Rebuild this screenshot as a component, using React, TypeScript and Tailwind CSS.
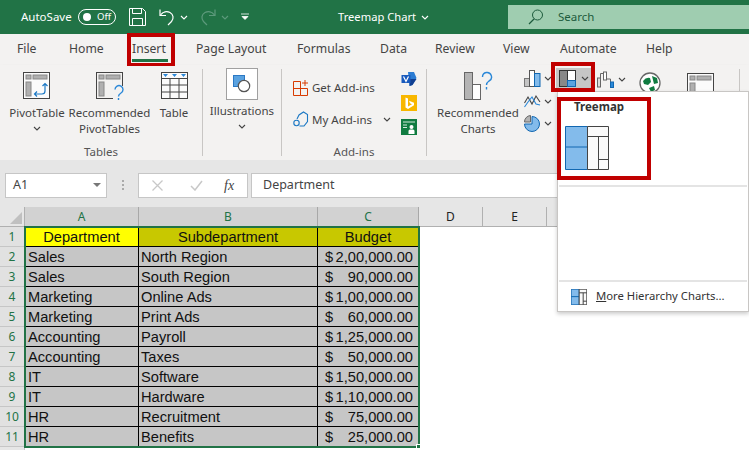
import type { ReactNode } from "react";

const tabs = [
  { name: "File", width: "w-[52px]" },
  { name: "Home", width: "w-[63px]" },
  { name: "Insert", width: "w-[64px]" },
  { name: "Page Layout", width: "w-[101px]" },
  { name: "Formulas", width: "w-[83px]" },
  { name: "Data", width: "w-[55px]" },
  { name: "Review", width: "w-[68px]" },
  { name: "View", width: "w-[57px]" },
  { name: "Automate", width: "w-[86px]" },
  { name: "Help", width: "w-[40px]" },
];

const rows = [
  ["Sales", "North Region", "2,00,000.00"],
  ["Sales", "South Region", "90,000.00"],
  ["Marketing", "Online Ads", "1,00,000.00"],
  ["Marketing", "Print Ads", "60,000.00"],
  ["Accounting", "Payroll", "1,25,000.00"],
  ["Accounting", "Taxes", "50,000.00"],
  ["IT", "Software", "1,50,000.00"],
  ["IT", "Hardware", "1,10,000.00"],
  ["HR", "Recruitment", "75,000.00"],
  ["HR", "Benefits", "25,000.00"],
];

function Chev({ className = "", color = "#444" }: { className?: string; color?: string }) {
  return (
    <svg width="8" height="5" viewBox="0 0 8 5" className={className}>
      <path d="M1 1l3 3 3-3" fill="none" stroke={color} strokeWidth="1.1" />
    </svg>
  );
}

function TreemapIcon({ size = 20 }: { size?: number }) {
  return (
    <svg width={size} height={size} viewBox="0 0 44 44">
      <rect x="0.5" y="0.5" width="22" height="43" fill="#83bbeb" stroke="#1167b1" vectorEffect="non-scaling-stroke" />
      <path d="M0.5 21h22" stroke="#1167b1" vectorEffect="non-scaling-stroke" />
      <rect x="22.5" y="0.5" width="21" height="43" fill="#fafafa" stroke="#444" vectorEffect="non-scaling-stroke" />
      <path d="M22.5 10.500h21M33.500 10.500v33M33.500 33.500h10" fill="none" stroke="#444" vectorEffect="non-scaling-stroke" />
    </svg>
  );
}

function PivotIcon({ question }: { question?: boolean }) {
  return (
    <svg width="30" height="30" viewBox="0 0 30 30">
      <rect x="1.5" y="1.5" width="26" height="26" fill={question ? "#f3f2f1" : "#fbfbfb"} stroke="#444" />
      <rect x="4" y="4" width="5" height="4" fill="#b0b0b0" stroke="#888" />
      <rect x="11" y="4" width="14" height="4" fill="#b0b0b0" stroke="#888" />
      <rect x="4" y="11" width="5" height="14" fill="#b0b0b0" stroke="#888" />
      {question ? (
        <>
          <rect x="18" y="15" width="12" height="15" fill="#f3f2f1" />
          <path d="M20 18.500a4 4 0 1 1 6 3.500c-1.500 1-2.500 1.500-2.500 3.500M23.500 27v2" fill="none" stroke="#2b88d8" strokeWidth="1.400" />
        </>
      ) : (
        <path d="M13 23h7a3 3 0 0 0 3-3v-7m-2.5 2l2.500-2.500 2.500 2.500M15 20.500L12.500 23l2.500 2.500" fill="none" stroke="#1b78c4" strokeWidth="1.200" />
      )}
    </svg>
  );
}

function TableIcon() {
  return (
    <svg width="29" height="30" viewBox="0 0 29 30">
      <rect x="1.5" y="1.5" width="26" height="26" fill="#fbfbfb" stroke="#444" />
      <path d="M1.5 7.500h26M1.5 14h26M1.5 21h26M10 7.500v20M19 7.500v20" stroke="#444" fill="none" />
      <path d="M3 3h5l-2.500 3zM12 3h5l-2.500 3zM21 3h5l-2.500 3z" fill="#2b88d8" />
    </svg>
  );
}

function IllustrationsIcon() {
  return (
    <div className="flex h-[32px] w-[32px] items-center justify-center border border-[#a0a0a0] bg-white">
      <svg width="18" height="18" viewBox="0 0 18 18">
        <rect x="0.5" y="0.5" width="11" height="11" fill="#5aa2e0" stroke="#2b78c4" />
        <circle cx="11" cy="11" r="5.700" fill="#fff" stroke="#555" strokeWidth="1.200" />
      </svg>
    </div>
  );
}

function GetAddinsIcon() {
  return (
    <svg width="16" height="16" viewBox="0 0 16 16">
      <path d="M0.500 1.500h7v14h-7zM0.500 8.500h14v7h-7" fill="none" stroke="#d83b01" />
      <path d="M12 0v6M9 3h6" fill="none" stroke="#d83b01" />
    </svg>
  );
}

function MyAddinsIcon() {
  return (
    <svg width="16" height="17" viewBox="0 0 16 17">
      <path d="M4 8L6 4l4.500-3 4 2.500v7L11 15H6.500" fill="none" stroke="#1b78c4" strokeWidth="1.100" />
      <circle cx="3.500" cy="12" r="2.700" fill="#f3f2f1" stroke="#1b78c4" strokeWidth="1.100" />
    </svg>
  );
}

function VisioIcon() {
  return (
    <svg width="16" height="16" viewBox="0 0 16 16">
      <path d="M7 1l6 0 2.500 6-4 7-3 1z" fill="#2b7cd3" />
      <path d="M9 8h6.500l-4 6-3 1z" fill="#103f91" />
      <rect x="0.500" y="4" width="9" height="8" fill="#185abd" />
      <path d="M2.500 5.500l2.500 5 2.500-5" fill="none" stroke="#fff" strokeWidth="1.200" />
    </svg>
  );
}

function BingIcon() {
  return (
    <svg width="16" height="16" viewBox="0 0 16 16">
      <rect width="16" height="16" fill="#f8b700" />
      <path d="M4.500 2.500l2.500 1v8l4-2.300-2-1-1-2.500 5 2v2.500L7 14l-2.500-1.500z" fill="#fff" />
    </svg>
  );
}

function PeopleIcon() {
  return (
    <svg width="16" height="16" viewBox="0 0 16 16">
      <rect width="16" height="16" fill="#107c41" />
      <path d="M2 3h12M2 6h4M2 8.500h4" stroke="#cfe8da" fill="none" />
      <circle cx="10.500" cy="8" r="2" fill="#fff" />
      <path d="M7.500 15v-3q0-1.500 1.500-1.500h3q1.500 0 1.500 1.500v3z" fill="#fff" />
    </svg>
  );
}

function RecChartsIcon() {
  return (
    <svg width="30" height="30" viewBox="0 0 30 30">
      <rect x="1.500" y="1.500" width="8" height="27" fill="#b4b4b4" stroke="#666" />
      <rect x="9.500" y="13.500" width="8" height="15" fill="#fff" stroke="#666" />
      <path d="M19.500 6a4.500 4.500 0 1 1 6.500 4c-1.500 1-2.500 2-2.500 4M23.500 16v2.500" fill="none" stroke="#2b88d8" strokeWidth="1.400" />
    </svg>
  );
}

function ColumnIcon() {
  return (
    <svg width="17" height="17" viewBox="0 0 17 17">
      <rect x="0.500" y="8.500" width="5" height="8" fill="#c4c4c4" stroke="#777" />
      <rect x="5.500" y="0.500" width="5" height="16" fill="#fff" stroke="#555" />
      <rect x="10.500" y="3.500" width="5.500" height="13" fill="#83bbeb" stroke="#1167b1" />
    </svg>
  );
}

function LineIcon() {
  return (
    <svg width="17" height="14" viewBox="0 0 17 14">
      <path d="M0.500 9L4 3l4 7 4-8 4 6" fill="none" stroke="#444" strokeWidth="1.100" />
      <path d="M0.500 13L4 8l4-5 4 7 4 1" fill="none" stroke="#2b88d8" strokeWidth="1.100" />
    </svg>
  );
}

function PieIcon() {
  return (
    <svg width="17" height="17" viewBox="0 0 17 17">
      <path d="M8 9V1.500a7.500 7.500 0 1 1-7.500 7.500z" fill="#83bbeb" stroke="#1167b1" />
      <path d="M6.500 7V0.500A6.500 6.500 0 0 0 0.500 7z" fill="#b4b4b4" stroke="#666" />
    </svg>
  );
}

function WaterfallIcon() {
  return (
    <svg width="17" height="17" viewBox="0 0 17 17">
      <rect x="0.500" y="7" width="3" height="9" fill="#ddd" stroke="#666" />
      <path d="M3.500 7V2.500h3M9.500 1v7h4v3" fill="none" stroke="#666" />
      <rect x="6.500" y="1" width="3" height="8" fill="#fff" stroke="#666" />
      <rect x="13.500" y="11" width="3" height="5.500" fill="#2b88d8" stroke="#1167b1" />
    </svg>
  );
}

function GlobeIcon() {
  return (
    <svg width="24" height="24" viewBox="0 0 24 24">
      <circle cx="12" cy="12" r="10" fill="#fff" stroke="#666" strokeWidth="1.300" />
      <path d="M5 10q3-4 7-3l1 4-3 3-4-1zM14 5l5 2 1 5-4 1zM11 17l5-2 1 4-4 2z" fill="#107c41" />
    </svg>
  );
}

function PivotChartIcon() {
  return (
    <svg width="29" height="28" viewBox="0 0 29 28">
      <rect x="1.500" y="1.500" width="26" height="25" fill="#fbfbfb" stroke="#444" />
      <rect x="4" y="4" width="5" height="4" fill="#b0b0b0" stroke="#888" />
      <rect x="11" y="4" width="14" height="4" fill="#b0b0b0" stroke="#888" />
      <rect x="4" y="11" width="5" height="14" fill="#b0b0b0" stroke="#888" />
    </svg>
  );
}

function SaveIcon() {
  return (
    <svg width="17" height="18" viewBox="0 0 17 18">
      <path d="M0.500 0.500h13l3 3v14h-16z" fill="none" stroke="#fff" />
      <path d="M3.500 0.500v5h9v-5M3.500 17.500v-7h10v7" fill="none" stroke="#fff" />
    </svg>
  );
}

function UndoIcon({ stroke }: { stroke: string }) {
  return (
    <svg width="16" height="18" viewBox="0 0 16 18">
      <path d="M1 1.500v6h6" fill="none" stroke={stroke} strokeWidth="1.200" />
      <path d="M1.500 7C4 3.500 8 3 11 4.500c3.500 2 4 6 1.500 9L9 17" fill="none" stroke={stroke} strokeWidth="1.200" />
    </svg>
  );
}

function TitleBar() {
  return (
    <div className="flex h-[34px] items-center bg-[#217346] text-white">
      <span className="ml-[21px] w-[57px] text-[11.500px]">AutoSave</span>
      <div className="flex h-[16px] w-[38px] items-center gap-[6px] rounded-full border border-white pl-[4px] text-[9.500px]">
        <span className="h-[8px] w-[8px] rounded-full bg-white" />
        <span>Off</span>
      </div>
      <span className="ml-[13px] flex"><SaveIcon /></span>
      <span className="ml-[13px] flex"><UndoIcon stroke="#fff" /></span>
      <Chev className="ml-[5px]" color="#fff" />
      <span className="ml-[12px] flex -scale-x-100"><UndoIcon stroke="#5d9a7c" /></span>
      <Chev className="ml-[5px]" color="#5d9a7c" />
      <svg width="8" height="8" viewBox="0 0 8 8" className="ml-[12px]">
        <path d="M0 1h8M1 3.500h6L4 6.500z" fill="#fff" stroke="#fff" strokeWidth="0.800" />
      </svg>
      <span className="ml-[89px] w-[83px] whitespace-nowrap text-[11.200px]">Treemap Chart</span>
      <Chev color="#fff" />
      <div className="ml-[79px] mt-[5px] flex h-[24px] flex-1 items-center self-start bg-[#9fcdb0] pl-[20px] text-[11.500px] text-[#1d5b3c]">
        <svg width="16" height="16" viewBox="0 0 16 16" className="mr-[14px]">
          <circle cx="9.500" cy="6" r="5" fill="none" stroke="#1d5b3c" />
          <path d="M6 10l-5 5" stroke="#1d5b3c" strokeWidth="1.200" />
        </svg>
        Search
      </div>
    </div>
  );
}

function TabRow() {
  return (
    <div className="flex h-[31px] items-center bg-[#f3f2f1] pl-[17px] text-[12.200px] text-[#444]">
      {tabs.map((t) => (
        <div key={t.name} className={"relative flex h-full shrink-0 items-center " + t.width}>
          {t.name}
          {t.name === "Insert" && (
            <span className="absolute -left-[5px] -top-[1px] h-[33px] w-[48px] border-[4px] border-b-[3px] border-[#c00000]">
              <span className="absolute bottom-[1px] left-[1px] h-[3px] w-[36px] bg-[#217346]" />
            </span>
          )}
        </div>
      ))}
    </div>
  );
}

function BigButton({ width, icon, lines, chevron }: { width: string; icon: ReactNode; lines: string[]; chevron?: boolean }) {
  return (
    <div className={"flex flex-col items-center text-center leading-[16px] " + width}>
      <div className="flex h-[32px] items-end justify-center">{icon}</div>
      <div className="mt-[4px]">
        {lines.map((l) => (
          <div key={l}>{l}</div>
        ))}
      </div>
      {chevron && <Chev className="mt-[5px]" />}
    </div>
  );
}

function Group({ width, label, children }: { width: string; label: string; children: ReactNode }) {
  return (
    <div className={"flex h-[87px] shrink-0 flex-col border-r border-[#c8c6c4] " + width}>
      <div className="flex h-[76px] shrink-0">{children}</div>
      <div className="h-[11px] text-center text-[11.500px] leading-[14px] text-[#555]">{label}</div>
    </div>
  );
}

function Ribbon() {
  return (
    <div className="flex h-[95px] items-start bg-[#f3f2f1] pt-[4px] text-[11.500px] text-[#444] shadow-[0_3px_4px_rgba(0,0,0,0.18)]">
      <Group width="w-[203px]" label="Tables">
        <div className="flex pl-[5px]">
          <BigButton width="w-[64px]" icon={<PivotIcon />} lines={["PivotTable"]} chevron />
          <BigButton width="w-[81px]" icon={<PivotIcon question />} lines={["Recommended", "PivotTables"]} />
          <BigButton width="w-[48px]" icon={<TableIcon />} lines={["Table"]} />
        </div>
      </Group>
      <Group width="w-[79px]" label="">
        <div className="-mt-[1px] flex w-full flex-col items-center leading-[16px]">
          <IllustrationsIcon />
          <div className="mt-[3px]">Illustrations</div>
          <Chev className="mt-[5px]" />
        </div>
      </Group>
      <Group width="w-[145px]" label="Add-ins">
        <div className="flex flex-col gap-[15px] pl-[11px] pt-[10px]">
          <div className="flex items-center gap-[3px]"><GetAddinsIcon /><span>Get Add-ins</span></div>
          <div className="flex items-center gap-[3px]"><MyAddinsIcon /><span>My Add-ins</span><Chev className="ml-[8px]" /></div>
        </div>
        <div className="ml-[10px] flex flex-col gap-[8px] pt-[2px]">
          <VisioIcon />
          <BingIcon />
          <PeopleIcon />
        </div>
      </Group>
      <div className="flex pl-[11px]">
        <BigButton width="w-[80px]" icon={<RecChartsIcon />} lines={["Recommended", "Charts"]} />
        <div className="ml-[6px] flex w-[30px] flex-col gap-[7px] pt-[1px]">
          <div className="flex items-center gap-[3px]"><ColumnIcon /><Chev /></div>
          <div className="flex items-center gap-[3px]"><LineIcon /><Chev /></div>
          <div className="flex items-center gap-[3px]"><PieIcon /><Chev /></div>
        </div>
        <div className="-mt-[1px] ml-[2px] flex h-[21px] w-[37px] items-center gap-[5px] self-start bg-[#c6c6c6] pl-[3px]">
          <svg width="17" height="17" viewBox="0 0 17 17">
            <rect x="0.500" y="0.500" width="8" height="16" fill="#888" stroke="#333" />
            <rect x="8.500" y="0.500" width="8" height="10" fill="#fff" stroke="#333" />
            <rect x="8.500" y="10.500" width="8" height="6" fill="#5aa2e0" stroke="#1167b1" />
          </svg>
          <Chev />
        </div>
        <div className="ml-[4px] flex h-[20px] items-center gap-[4px]"><WaterfallIcon /><Chev /></div>
        <div className="ml-[12px] pt-[2px]"><GlobeIcon /></div>
        <div className="ml-[24px] pt-[3px]"><PivotChartIcon /></div>
        <div className="ml-[24px] h-[24px] w-px bg-[#c8c6c4]" />
      </div>
    </div>
  );
}

function FormulaBar() {
  return (
    <div className="flex h-[47px] items-center bg-[#e6e6e6] pl-[5px] pt-[3px] text-[12.500px] text-[#444]">
      <div className="flex h-[25px] w-[102px] items-center justify-between border border-[#c6c6c6] bg-white pl-[7px] pr-[5px]">
        A1
        <span className="h-0 w-0 border-x-[4px] border-t-[4px] border-x-transparent border-t-[#777]" />
      </div>
      <div className="ml-[15px] flex w-[2px] flex-col gap-[2px]">
        <span className="h-[2px] bg-[#aaa]" />
        <span className="h-[2px] bg-[#aaa]" />
        <span className="h-[2px] bg-[#aaa]" />
      </div>
      <div className="ml-[14px] flex h-[25px] w-[110px] items-center border border-[#c6c6c6] bg-white pl-[13px]">
        <svg width="11" height="11" viewBox="0 0 11 11"><path d="M0.500 0.500l10 10M10.500 0.500l-10 10" stroke="#c8c8c8" strokeWidth="1.300" /></svg>
        <svg width="13" height="11" viewBox="0 0 13 11" className="ml-[27px]"><path d="M1 6l4 4 7-9" fill="none" stroke="#c8c8c8" strokeWidth="1.500" /></svg>
        <span className="ml-[21px] font-['Liberation_Serif',serif] text-[14px] italic">fx</span>
      </div>
      <div className="ml-[3px] flex h-[25px] flex-1 items-center border border-[#c6c6c6] bg-white pl-[11px]">Department</div>
    </div>
  );
}

function Sheet() {
  const rowNum = "flex h-[20px] items-center justify-center border-b border-r border-[#c6c6c6] bg-[#e1e1e1] font-['Noto_Sans',sans-serif] text-[12px] text-[#217346]";
  const cell = "flex h-[20px] items-center border-b border-r border-black px-[3px] text-[14.670px] text-[#111]";
  return (
    <div className="bg-white font-['Liberation_Sans',sans-serif]">
      <div className="grid h-[20px] grid-cols-[25px_114px_179px_101px_64px_64px_1fr] bg-[#e6e6e6] font-['Noto_Sans',sans-serif] text-[12px]">
        <div className="flex items-end justify-end border-b border-r border-[#b0b0b0] bg-[#e6e6e6] p-[2px]">
          <span className="h-0 w-0 border-b-[12px] border-l-[12px] border-b-[#c0c0c0] border-l-transparent" />
        </div>
        {["A", "B", "C"].map((c) => (
          <div key={c} className="flex items-center justify-center border-b border-r border-[#a8a8a8] bg-[#d2d2d2] text-[#217346]">{c}</div>
        ))}
        {["D", "E"].map((c) => (
          <div key={c} className="flex items-center justify-center border-b border-r border-[#b0b0b0] text-[#222]">{c}</div>
        ))}
        <div className="border-b border-[#b0b0b0]" />
      </div>
      <div className="grid grid-cols-[25px_114px_179px_101px]">
        <div className={rowNum}>1</div>
        <div className={cell + " justify-center bg-[#ffff00]"}>Department</div>
        <div className={cell + " justify-center bg-[#c8c800]"}>Subdepartment</div>
        <div className={cell + " justify-center bg-[#c8c800]"}>Budget</div>
        {rows.map((r, i) => (
          <div key={i} className="contents">
            <div className={rowNum}>{i + 2}</div>
            <div className={cell + " bg-[#c6c6c6]"}>{r[0]}</div>
            <div className={cell + " bg-[#c6c6c6] pl-[2px]"}>{r[1]}</div>
            <div className={cell + " justify-between bg-[#c6c6c6] pl-[7px] pr-[5px]"}>
              <span>$</span>
              <span>{r[2]}</span>
            </div>
          </div>
        ))}
      </div>
      <div className="h-[3px] w-[25px] border-r border-[#c6c6c6] bg-[#e6e6e6]" />
    </div>
  );
}

function ChartMenu() {
  return (
    <div className="absolute left-[557px] top-[91px] flex h-[221px] w-[192px] flex-col border border-[#c8c6c4] bg-white text-[#333] shadow-[0_2px_4px_rgba(0,0,0,0.2)]">
      <div className="mx-[1px] h-[95px] border-b-2 border-[#e4e4e4]">
        <div className="-ml-[2px] mt-[5px] h-[83px] w-[94px] border-[4px] border-[#c00000] pl-[13px]">
          <div className="text-[11.500px] font-bold leading-[11px]">Treemap</div>
          <div className="-ml-[9px] mt-[14px]"><TreemapIcon size={44} /></div>
        </div>
      </div>
      <div className="flex-1" />
      <div className="mx-[1px] flex h-[31px] items-center border-t-2 border-[#e4e4e4] pl-[12px] text-[11.300px]">
        <TreemapIcon size={16} />
        <span className="ml-[9px]"><span className="underline">M</span>ore Hierarchy Charts...</span>
      </div>
    </div>
  );
}

export default function App() {
  return (
    <div className="relative h-[450px] w-[749px] overflow-hidden bg-white font-['Noto_Sans',sans-serif]">
      <TitleBar />
      <TabRow />
      <Ribbon />
      <FormulaBar />
      <Sheet />
      <ChartMenu />
      {/* red annotation around the treemap ribbon button */}
      <div className="absolute left-[551px] top-[62px] h-[30px] w-[44px] border-[4px] border-[#c00000]" />
      {/* selection around the data range */}
      <div className="absolute left-[24px] top-[226px] h-[222px] w-[396px] border-2 border-[#217346]" />
      <div className="absolute left-[416px] top-[444px] h-[5px] w-[5px] border border-white bg-[#217346]" />
    </div>
  );
}
